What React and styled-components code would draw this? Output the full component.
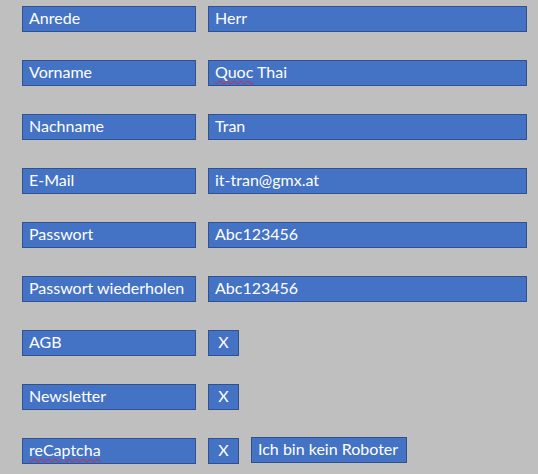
import React from "react";
import styled, { createGlobalStyle } from "styled-components";

const GlobalStyle = createGlobalStyle`
  body {
    margin: 0;
    background-color: #bfbfbf;
    font-family: Lato, "Open Sans", sans-serif;
  }
`;

const fields = [
  { label: "Anrede", value: "Herr" },
  { label: "Vorname", value: "Quoc Thai", typo: "Quoc" },
  { label: "Nachname", value: "Tran" },
  { label: "E-Mail", value: "it-tran@gmx.at" },
  { label: "Passwort", value: "Abc123456" },
  { label: "Passwort wiederholen", value: "Abc123456" },
  { label: "AGB", check: true },
  { label: "Newsletter", check: true },
  { label: "reCaptcha", check: true, captcha: true, labelTypo: true },
];

const App = () => {
  return (
    <>
      <GlobalStyle />
      <StForm>
        {fields.map((f) => (
          <StRow key={f.label}>
            <StBox $width={174}>
              {f.labelTypo ? <StTypo>{f.label}</StTypo> : <span>{f.label}</span>}
            </StBox>
            {f.check ? (
              <StBox $width={31} $center>
                <span>X</span>
              </StBox>
            ) : (
              <StBox $width={319}>
                {f.typo ? (
                  <span>
                    <StTypo>{f.typo}</StTypo>
                    {f.value.slice(f.typo.length)}
                  </span>
                ) : (
                  <span>{f.value}</span>
                )}
              </StBox>
            )}
            {f.captcha && (
              <StBox $width={156} $shift={-3}>
                <span>Ich bin kein Roboter</span>
              </StBox>
            )}
          </StRow>
        ))}
      </StForm>
    </>
  );
};

export default App;

const StForm = styled.div`
  display: flex;
  flex-direction: column;
  gap: 28px;
  padding: 6px 0 0 22px;
`;

const StRow = styled.div`
  display: flex;
  align-items: center;
  gap: 12px;
`;

const StBox = styled.div`
  box-sizing: border-box;
  width: ${(p) => p.$width}px;
  height: 26px;
  background-color: #4472c4;
  border: 1px solid #2f528f;
  color: #ffffff;
  font-size: 16px;
  line-height: 22px;
  padding: 0 6px 2px;
  white-space: pre;
  display: flex;
  align-items: center;
  justify-content: ${(p) => (p.$center ? "center" : "flex-start")};
  margin-top: ${(p) => (p.$shift ? p.$shift + "px" : "0")};
`;

const StTypo = styled.span`
  text-decoration: underline wavy #e8202a;
  text-decoration-thickness: 1px;
  text-underline-offset: 2px;
`;
